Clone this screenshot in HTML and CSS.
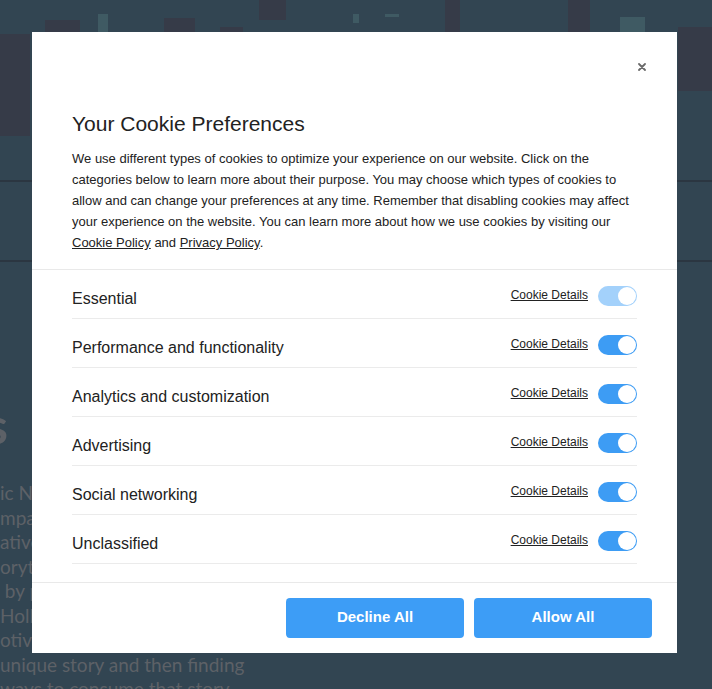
FILE: index.html
```html
<!DOCTYPE html>
<html lang="en">
<head>
<meta charset="utf-8">
<title>Your Cookie Preferences</title>
<link rel="stylesheet" href="styles.css">
</head>
<body>
<div class="page">
  <header class="hero">
    <span class="blk b1"></span>
    <span class="blk b2"></span>
    <span class="blk b3"></span>
    <span class="blk b4"></span>
    <span class="blk b5"></span>
    <span class="blk b6"></span>
    <span class="blk b7"></span>
    <span class="blk b8"></span>
    <span class="win w1"></span>
    <span class="win w2"></span>
    <span class="win w3"></span>
    <span class="win w4"></span>
  </header>
  <nav class="nav"></nav>
  <section class="story">
    <h2 class="story-title">s</h2>
    <div class="story-text">
      <div>ic National Geographic</div>
      <div>mpanies and creators</div>
      <div>atives who love</div>
      <div>orytelling and craft</div>
      <div>&nbsp;by people</div>
      <div>Hollywood studios</div>
      <div>otivated by finding a</div>
      <div>unique story and then finding</div>
      <div>ways to consume that story</div>
    </div>
  </section>
</div>

<div class="modal" role="dialog" aria-labelledby="cp-title">
  <div class="close-row">
    <button class="close" aria-label="Close">
      <svg width="8" height="8" viewBox="0 0 8 8"><path d="M1 1L7 7M7 1L1 7" stroke="#6a6a6a" stroke-width="1.8" stroke-linecap="round"/></svg>
    </button>
  </div>
  <div class="intro">
    <h1 id="cp-title" class="title">Your Cookie Preferences</h1>
    <p class="desc">We use different types of cookies to optimize your experience on our website. Click on the categories below to learn more about their purpose. You may choose which types of cookies to allow and can change your preferences at any time. Remember that disabling cookies may affect your experience on the website. You can learn more about how we use cookies by visiting our <a href="#">Cookie Policy</a> and <a href="#">Privacy Policy</a>.</p>
  </div>
  <div class="cats">
    <div class="row"><span class="label">Essential</span><a class="details" href="#">Cookie Details</a><span class="toggle locked"><span class="knob"></span></span></div>
    <div class="row"><span class="label">Performance and functionality</span><a class="details" href="#">Cookie Details</a><span class="toggle"><span class="knob"></span></span></div>
    <div class="row"><span class="label">Analytics and customization</span><a class="details" href="#">Cookie Details</a><span class="toggle"><span class="knob"></span></span></div>
    <div class="row"><span class="label">Advertising</span><a class="details" href="#">Cookie Details</a><span class="toggle"><span class="knob"></span></span></div>
    <div class="row"><span class="label">Social networking</span><a class="details" href="#">Cookie Details</a><span class="toggle"><span class="knob"></span></span></div>
    <div class="row"><span class="label">Unclassified</span><a class="details" href="#">Cookie Details</a><span class="toggle"><span class="knob"></span></span></div>
  </div>
  <div class="actions">
    <button class="btn">Decline All</button>
    <button class="btn">Allow All</button>
  </div>
</div>
</body>
</html>
```

FILE: styles.css
```css
* { box-sizing: border-box; }
html, body { margin: 0; padding: 0; }
body {
  background: #324552;
  width: 712px;
  height: 689px;
  overflow: hidden;
  font-family: "Liberation Sans", Arial, sans-serif;
}

/* background page */
.page { width: 712px; }
.hero {
  position: relative;
  height: 182px;
  border-bottom: 2px solid #2b3641;
}
.blk { position: absolute; background: #363b48; }
.b1 { left: 0; top: 34px; width: 30px; height: 102px; }
.b2 { left: 45px; top: 20px; width: 35px; height: 23px; }
.b3 { left: 164px; top: 18px; width: 31px; height: 25px; }
.b4 { left: 220px; top: 27px; width: 23px; height: 16px; }
.b5 { left: 259px; top: 0; width: 27px; height: 20px; }
.b6 { left: 445px; top: 0; width: 15px; height: 32px; }
.b7 { left: 568px; top: 0; width: 22px; height: 32px; }
.b8 { left: 678px; top: 27px; width: 34px; height: 64px; }
.win { position: absolute; background: #3f5a63; }
.w1 { left: 98px; top: 14px; width: 10px; height: 22px; }
.w2 { left: 353px; top: 14px; width: 6px; height: 9px; }
.w3 { left: 385px; top: 14px; width: 14px; height: 3px; }
.w4 { left: 620px; top: 17px; width: 25px; height: 16px; }
.nav {
  height: 80px;
  border-bottom: 2px solid #2b3641;
}
.story { padding-top: 138px; }
.story-title {
  margin: 0;
  font-family: Lato, sans-serif;
  font-weight: 700;
  font-size: 50px;
  line-height: 50px;
  color: #5d6167;
  margin-left: -14px;
}
.story-text {
  margin-top: 31px;
  font-family: Lato, sans-serif;
  font-size: 19px;
  line-height: 24.5px;
  color: #5d6167;
  white-space: nowrap;
}

/* modal */
.modal {
  position: fixed;
  left: 32px;
  top: 32px;
  width: 645px;
  height: 621px;
  background: #fff;
  color: #222;
  display: flex;
  flex-direction: column;
}
.close-row {
  display: flex;
  justify-content: flex-end;
  padding: 31px 31px 0;
}
.close {
  width: 8px;
  height: 8px;
  padding: 0;
  border: 0;
  background: none;
  display: block;
  cursor: pointer;
}
.close svg { display: block; }
.intro {
  padding: 41px 40px 16px;
}
.title {
  margin: 0;
  font-size: 21px;
  line-height: 24px;
  font-weight: 400;
  color: #222;
}
.desc {
  margin: 12px 0 0;
  font-size: 13px;
  line-height: 21px;
  color: #222;
}
.desc a { color: #222; text-decoration: underline; }
.cats {
  border-top: 1px solid #e9e9e9;
  border-bottom: 1px solid #e9e9e9;
  padding: 0 40px 18px;
}
.row {
  height: 49px;
  border-bottom: 1px solid #ebebeb;
  display: flex;
  align-items: center;
  padding-top: 4px;
}
.label {
  flex: 1;
  font-size: 16px;
  color: #222;
  padding-top: 5px;
}
.details {
  font-size: 12px;
  color: #222;
  text-decoration: underline;
  margin-right: 10px;
  padding-bottom: 2px;
}
.toggle {
  position: relative;
  width: 39px;
  height: 20px;
  border-radius: 10px;
  background: #3d9cf4;
  display: flex;
  align-items: center;
  justify-content: flex-end;
  padding-right: 1px;
}
.toggle.locked { background: #a3d1fb; }
.knob {
  width: 18px;
  height: 18px;
  border-radius: 50%;
  background: #fff;
}
.actions {
  display: flex;
  justify-content: flex-end;
  gap: 10px;
  padding: 15px 25px 15px;
}
.btn {
  width: 178px;
  height: 40px;
  border: 0;
  border-radius: 4px;
  background: #3d9df6;
  color: #fff;
  font-family: "Liberation Sans", Arial, sans-serif;
  font-weight: 700;
  font-size: 15px;
  padding: 0 0 3px;
  cursor: pointer;
}
```
